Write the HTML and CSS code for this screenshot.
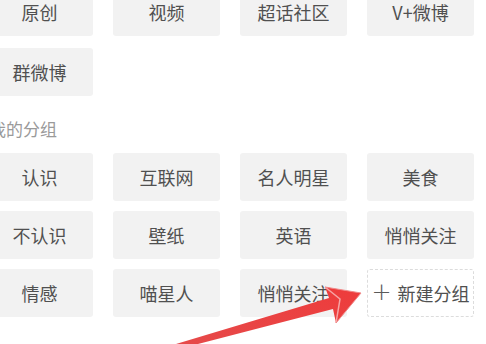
FILE: index.html
```html
<!DOCTYPE html>
<html lang="zh">
<head>
<meta charset="utf-8">
<link rel="stylesheet" href="styles.css">
</head>
<body>
<div class="page">
  <div class="grid grid-top">
    <div class="tag">原创</div>
    <div class="tag">视频</div>
    <div class="tag">超话社区</div>
    <div class="tag">V+微博</div>
    <div class="tag">群微博</div>
  </div>
  <div class="section-title">我的分组</div>
  <div class="grid grid-mine">
    <div class="tag">认识</div>
    <div class="tag">互联网</div>
    <div class="tag">名人明星</div>
    <div class="tag">美食</div>
    <div class="tag">不认识</div>
    <div class="tag">壁纸</div>
    <div class="tag">英语</div>
    <div class="tag">悄悄关注</div>
    <div class="tag">情感</div>
    <div class="tag">喵星人</div>
    <div class="tag">悄悄关注</div>
    <div class="tag tag-new"><span class="plus">+</span>新建分组</div>
  </div>
</div>
<svg class="arrow" width="486" height="344" viewBox="0 0 486 344">
  <defs>
    <linearGradient id="ag" x1="0" y1="1" x2="1" y2="0">
      <stop offset="0" stop-color="#e64a4a"/>
      <stop offset="1" stop-color="#ee3b3b"/>
    </linearGradient>
  </defs>
  <polygon points="176,344 329,298 325,287 361,293 336,323 333,309 198,344" fill="url(#ag)"/>
  <polyline points="325,287 340,299 336,323" fill="none" stroke="#f6a5a5" stroke-width="1.5"/>
  <polyline points="325,287 361,293 336,323" fill="none" stroke="#f08a8a" stroke-width="1"/>
</svg>
</body>
</html>
```
FILE: styles.css
```css
html, body {
  margin: 0;
  padding: 0;
  background: #ffffff;
  overflow: hidden;
}
body {
  width: 486px;
  height: 344px;
  position: relative;
  font-family: "Noto Sans CJK SC", "Noto Sans", sans-serif;
}
.page {
  margin-left: -14px;
  width: 488px;
}
.grid {
  display: grid;
  grid-template-columns: repeat(4, 107px);
  column-gap: 20px;
}
.grid-top {
  margin-top: -12px;
  row-gap: 12px;
  grid-auto-rows: 48px;
}
.grid-mine {
  row-gap: 10px;
  grid-auto-rows: 48px;
}
.tag {
  background: #f2f2f2;
  border-radius: 3px;
  color: #505050;
  font-size: 18px;
  display: flex;
  align-items: center;
  justify-content: center;
  line-height: 1;
}
.tag-new {
  background: #ffffff;
  border: 1px dashed #dcdcdc;
  box-sizing: border-box;
}
.plus {
  font-family: "DejaVu Sans", sans-serif;
  font-size: 24px;
  font-weight: 200;
  margin-right: 6px;
  color: #5a5a5a;
  position: relative;
  top: -1px;
}
.section-title {
  color: #9a9a9a;
  font-size: 17px;
  line-height: 24px;
  padding: 21px 0 12px 3px;
}
.arrow {
  position: absolute;
  left: 0;
  top: 0;
  pointer-events: none;
}
```
